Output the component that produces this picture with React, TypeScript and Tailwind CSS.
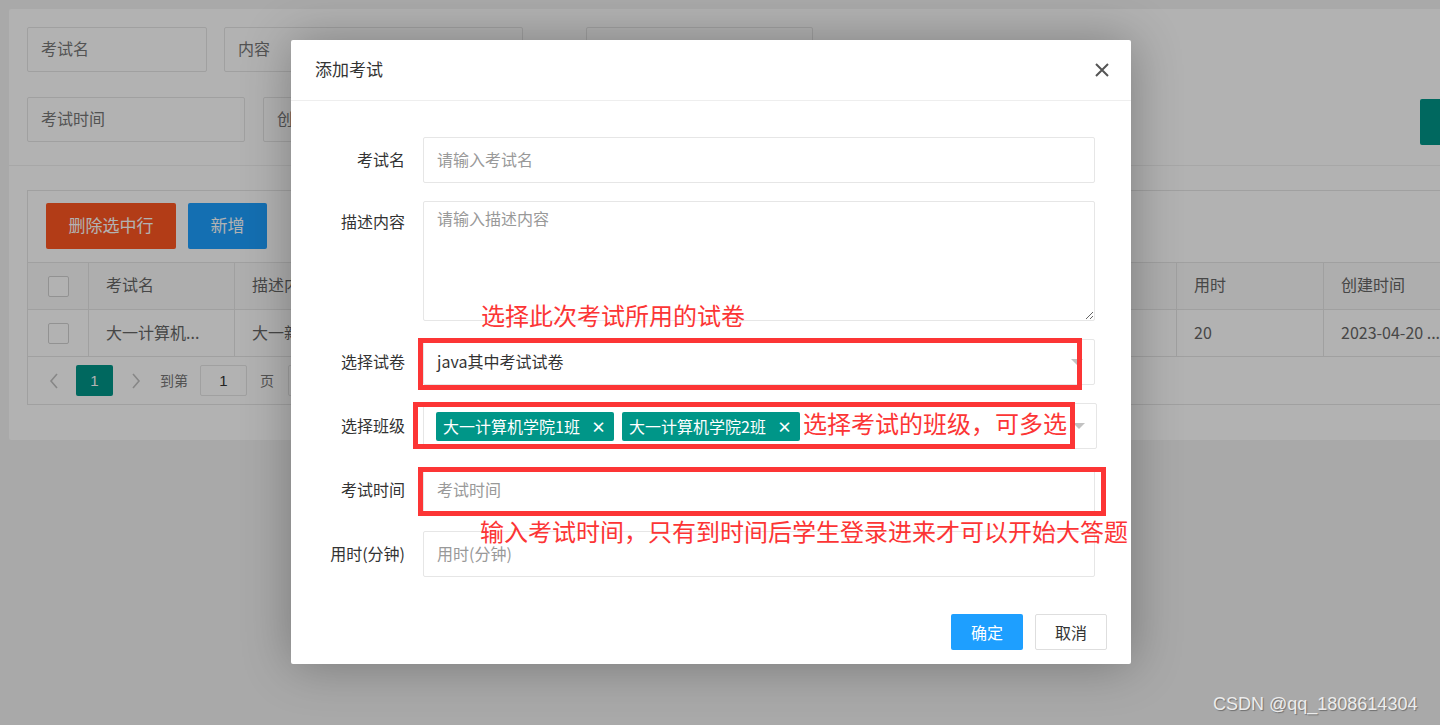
import React from "react";

function Caret() {
  return (
    <span className="absolute right-[11px] top-1/2 -mt-[3px] w-0 h-0 border-t-[6px] border-t-[#c2c2c2] border-l-[6px] border-l-transparent border-r-[6px] border-r-transparent" />
  );
}

function Tag({ text }: { text: string }) {
  return (
    <span className="shrink-0 flex items-center justify-between w-[178px] h-[29px] bg-[#009688] text-white text-[16px] leading-[29px] pl-[7px] pr-[8px] rounded-[2px]">
      {text}
      <span className="font-bold text-[15px]">×</span>
    </span>
  );
}

export default function App() {
  const cols = [
    { w: 146, h: "考试名", v: "大一计算机..." },
    { w: 146, h: "描述内容", v: "大一新..." },
    { w: 220, h: "试卷名称", v: "java其中考试试卷" },
    { w: 250, h: "班级", v: "大一计算机学院1班" },
    { w: 180, h: "考试时间", v: "2023-04-20 10:00" },
    { w: 146, h: "状态", v: "..." },
    { w: 147, h: "用时", v: "20" },
    { w: 160, h: "创建时间", v: "2023-04-20 ..." },
  ];
  return (
    <div className="relative w-[1440px] h-[725px] overflow-hidden bg-[#f2f2f2] font-['Noto_Sans_CJK_SC',sans-serif]">
      {/* background page */}
      <div className="pt-[9px] pl-[9px]">
        <div className="w-[1500px] h-[431px] bg-white rounded-[2px]">
          <div className="h-[157px] border-b border-[#f0f0f0] px-[18px] pt-[18px]">
            <div className="flex h-[45px]">
              <div className="shrink-0 w-[180px] h-[45px] border border-[#e6e6e6] rounded-[2px] pl-[13px] text-[16px] leading-[41px] text-[#777]">考试名</div>
              <div className="shrink-0 ml-[17px] w-[299px] h-[45px] border border-[#e6e6e6] rounded-[2px] pl-[13px] text-[16px] leading-[41px] text-[#777]">内容</div>
              <div className="shrink-0 ml-[63px] w-[227px] h-[45px] border border-[#e6e6e6] rounded-[2px]" />
            </div>
            <div className="flex h-[45px] mt-[25px]">
              <div className="shrink-0 w-[218px] h-[45px] border border-[#e6e6e6] rounded-[2px] pl-[13px] text-[16px] leading-[41px] text-[#777]">考试时间</div>
              <div className="shrink-0 ml-[18px] w-[240px] h-[45px] border border-[#e6e6e6] rounded-[2px] pl-[13px] text-[16px] leading-[41px] text-[#777]">创建时间</div>
              <div className="shrink-0 ml-[917px] mt-[2px] w-[80px] h-[46px] bg-[#009688] rounded-[2px]" />
            </div>
          </div>
          <div className="px-[18px] pt-[24px]">
            <div className="w-[1480px] border border-[#e6e6e6]">
              <div className="h-[71px] pl-[18px] pt-[12px] flex gap-[12px]">
                <div className="w-[130px] h-[46px] bg-[#ff5722] rounded-[2px] text-white text-[17px] leading-[44px] text-center">删除选中行</div>
                <div className="w-[79px] h-[46px] bg-[#1e9fff] rounded-[2px] text-white text-[17px] leading-[44px] text-center">新增</div>
              </div>
              <div className="flex h-[47px] border-t border-[#e6e6e6] bg-[#fafafa] text-[16px] text-[#666]">
                <div className="shrink-0 w-[60px] flex items-center justify-center">
                  <span className="w-[21px] h-[21px] border border-[#d2d2d2] bg-white rounded-[2px]" />
                </div>
                {cols.map((c, i) => (
                  <div key={i} style={{ width: c.w }} className="shrink-0 border-l border-[#e6e6e6] pl-[17px] leading-[42px] whitespace-nowrap overflow-hidden">{c.h}</div>
                ))}
              </div>
              <div className="flex h-[47px] border-t border-[#e6e6e6] text-[16px] text-[#666]">
                <div className="shrink-0 w-[60px] flex items-center justify-center">
                  <span className="w-[21px] h-[21px] border border-[#d2d2d2] bg-white rounded-[2px]" />
                </div>
                {cols.map((c, i) => (
                  <div key={i} style={{ width: c.w }} className="shrink-0 border-l border-[#e6e6e6] pl-[17px] leading-[44px] whitespace-nowrap overflow-hidden">{c.v}</div>
                ))}
              </div>
              <div className="flex items-center h-[48px] border-t border-[#e6e6e6] pl-[18px] text-[14px] text-[#666]">
                <svg width="12" height="16" viewBox="0 0 12 16" className="ml-[2px]"><path d="M9 1 L3 8 L9 15" stroke="#c2c2c2" strokeWidth="1.6" fill="none" /></svg>
                <div className="ml-[16px] w-[37px] h-[31px] bg-[#009688] rounded-[2px] text-white text-[15px] leading-[31px] text-center font-['Liberation_Sans',sans-serif]">1</div>
                <svg width="12" height="16" viewBox="0 0 12 16" className="ml-[17px]"><path d="M3 1 L9 8 L3 15" stroke="#c2c2c2" strokeWidth="1.6" fill="none" /></svg>
                <span className="ml-[18px] text-[#777]">到第</span>
                <div className="ml-[12px] w-[47px] h-[31px] border border-[#e6e6e6] rounded-[2px] text-center leading-[29px] text-[15px] text-[#333] font-['Liberation_Sans',sans-serif]">1</div>
                <span className="ml-[13px] text-[#777]">页</span>
                <div className="ml-[14px] w-[60px] h-[31px] border border-[#e6e6e6] rounded-[2px] text-center leading-[29px] text-[14px] text-[#666]">确定</div>
              </div>
            </div>
          </div>
        </div>
      </div>

      {/* overlay */}
      <div className="absolute inset-0 bg-black/30" />

      {/* modal */}
      <div className="absolute left-[291px] top-[40px] w-[840px] h-[624px] bg-white rounded-[2px] shadow-[1px_1px_50px_rgba(0,0,0,0.3)] flex flex-col">
        <div className="h-[61px] border-b border-[#eee] flex items-center justify-between pl-[24px] pr-[21px]">
          <span className="text-[17px] text-[#333] -mt-[2px]">添加考试</span>
          <svg width="16" height="16" viewBox="0 0 16 16"><path d="M2 2 L14 14 M14 2 L2 14" stroke="#555" strokeWidth="2" fill="none" /></svg>
        </div>
        <div className="pt-[36px] flex flex-col gap-[18px] text-[16px]">
          <div className="flex items-center h-[46px]">
            <label className="w-[114px] text-right text-[#333] -mt-[3px]">考试名</label>
            <div className="ml-[18px] w-[672px] h-[46px] border border-[#e6e6e6] rounded-[2px] pl-[13px] leading-[42px] text-[#999]">请输入考试名</div>
          </div>
          <div className="flex h-[120px]">
            <label className="w-[114px] text-right text-[#333] pt-[7px] leading-[26px]">描述内容</label>
            <textarea
              className="ml-[18px] w-[672px] h-[120px] border border-[#e6e6e6] rounded-[2px] pl-[13px] pt-[4px] text-[16px] leading-[24px] placeholder:text-[#999] outline-none"
              placeholder="请输入描述内容"
            />
          </div>
          <div className="flex items-center h-[46px]">
            <label className="w-[114px] text-right text-[#333] -mt-[3px]">选择试卷</label>
            <div className="relative ml-[18px] w-[672px] h-[46px] border border-[#e6e6e6] rounded-[2px] pl-[13px] leading-[42px] text-[#333]">
              java其中考试试卷
              <Caret />
            </div>
          </div>
          <div className="flex items-center h-[46px]">
            <label className="w-[114px] text-right text-[#333] -mt-[3px]">选择班级</label>
            <div className="relative ml-[18px] w-[674px] h-[46px] border border-[#e6e6e6] rounded-[2px] pl-[12px] flex items-center gap-[8px]">
              <Tag text="大一计算机学院1班" />
              <Tag text="大一计算机学院2班" />
              <Caret />
            </div>
          </div>
          <div className="flex items-center h-[46px]">
            <label className="w-[114px] text-right text-[#333] -mt-[3px]">考试时间</label>
            <div className="ml-[18px] w-[672px] h-[46px] border border-[#e6e6e6] rounded-[2px] pl-[13px] leading-[42px] text-[#999]">考试时间</div>
          </div>
          <div className="flex items-center h-[46px]">
            <label className="w-[114px] text-right text-[#333] -mt-[3px]">用时(分钟)</label>
            <div className="ml-[18px] w-[672px] h-[46px] border border-[#e6e6e6] rounded-[2px] pl-[13px] leading-[42px] text-[#999]">用时(分钟)</div>
          </div>
        </div>
        <div className="mt-auto pb-[14px] pr-[24px] flex justify-end gap-[12px]">
          <button className="w-[72px] h-[36px] bg-[#1e9fff] text-white text-[16px] rounded-[2px]">确定</button>
          <button className="w-[72px] h-[36px] bg-white border border-[#dedede] text-[#333] text-[16px] rounded-[2px]">取消</button>
        </div>

        {/* annotations */}
        <div className="absolute left-[127px] top-[298px] w-[664px] h-[52px] border-[5px] border-[#fc3535]" />
        <div className="absolute left-[122px] top-[362px] w-[662px] h-[47px] border-[5px] border-[#fc3535]" />
        <div className="absolute left-[127px] top-[427px] w-[688px] h-[49px] border-[5px] border-[#fc3535]" />
        <div className="absolute left-[190px] top-[261px] text-[24px] leading-[28px] text-[#fc3535] whitespace-nowrap">选择此次考试所用的试卷</div>
        <div className="absolute left-[512px] top-[369px] text-[24px] leading-[28px] text-[#fc3535] whitespace-nowrap bg-white">选择考试的班级，可多选</div>
        <div className="absolute left-[189px] top-[477px] text-[24px] leading-[28px] text-[#fc3535] whitespace-nowrap">输入考试时间，只有到时间后学生登录进来才可以开始大答题</div>
      </div>

      {/* watermark */}
      <div className="absolute left-[1213px] top-[693px] text-[18px] leading-[22px] text-[#ececec] font-['Liberation_Sans',sans-serif] [text-shadow:1px_1px_1px_rgba(0,0,0,0.35)] whitespace-nowrap">
        CSDN @qq_1808614304
      </div>
    </div>
  );
}
